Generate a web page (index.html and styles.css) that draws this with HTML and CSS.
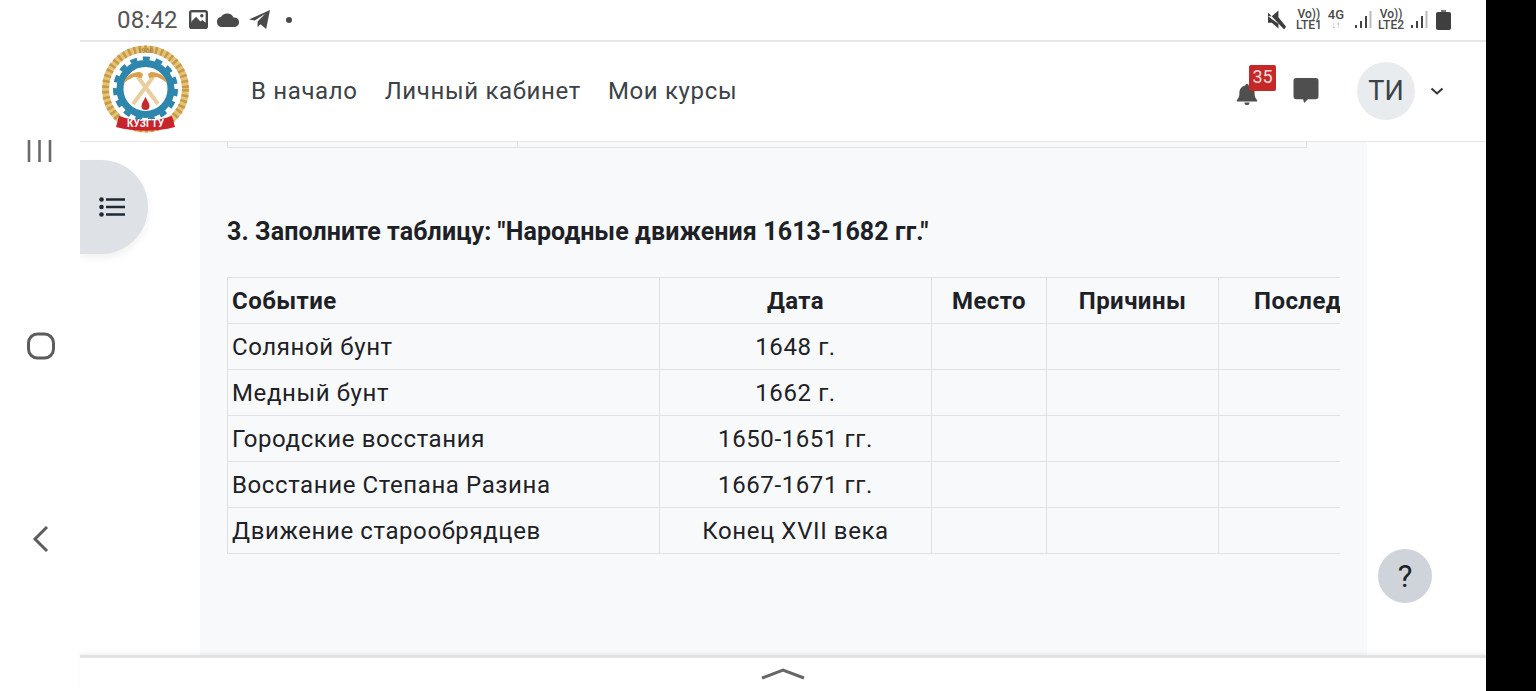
FILE: index.html
```html
<!DOCTYPE html>
<html lang="ru">
<head>
<meta charset="utf-8">
<title>Народные движения</title>
<link rel="stylesheet" href="styles.css">
</head>
<body>
<div class="shell">
  <aside class="rail">
    <svg class="rail-icon ri-menu" width="26" height="24" viewBox="0 0 26 24"><path d="M2 1v22M12.500 1v22M23 1v22" stroke="#6a6a6a" stroke-width="2.600" fill="none"/></svg>
    <svg class="rail-icon ri-home" width="30" height="28" viewBox="0 0 30 28"><rect x="2.500" y="2" width="25" height="24" rx="9" stroke="#5c5c5c" stroke-width="3" fill="none"/></svg>
    <svg class="rail-icon ri-back" width="20" height="30" viewBox="0 0 20 30"><path d="M16 3 4 15l12 12" stroke="#5c5c5c" stroke-width="3" fill="none"/></svg>
  </aside>
  <div class="main">
    <div class="status">
      <div class="status-left">
        <span class="clock">08:42</span>
        <svg width="19" height="19" viewBox="0 0 20 20"><rect x="0" y="0" width="20" height="20" rx="3" fill="#4a4a4a"/><rect x="2.500" y="2.500" width="15" height="11" fill="#fff"/><circle cx="13.500" cy="6" r="1.800" fill="#4a4a4a"/><path d="M2.500 12 7.500 7l4.500 5 2-1.500 3.500 3V15h-15z" fill="#4a4a4a"/></svg>
        <svg width="24" height="14" viewBox="0 0 24 14"><path d="M6 14a5 5 0 0 1-1-9.900A7 7 0 0 1 17.500 4.500 4.800 4.800 0 0 1 19 14z" fill="#4a4a4a"/></svg>
        <svg width="23" height="21" viewBox="0 0 24 22"><path d="M1 11 23 1l-4 20-6-5-3 3v-6l8-8-11 7z" fill="#4a4a4a"/></svg>
        <span class="dot"></span>
      </div>
      <div class="status-right">
        <svg class="mute" width="19" height="20" viewBox="0 0 20 20"><path d="M0 6h4l7-6v7l8 10-2 3L0 2zM0 6v7h4l7 6v-5z" fill="#3d3d3d"/></svg>
        <span class="net"><b>Vo))</b><b>LTE1</b></span>
        <span class="net"><b class="g4">4G</b><i>↓↑</i></span>
        <svg class="bars" width="18" height="20" viewBox="0 0 18 20"><path d="M1 15h2v3H1zM6 11h2v7H6zM11 6h2v12h-2z" fill="#444"/><path d="M15.500 1h2v17h-2z" fill="#bbb"/></svg>
        <span class="net"><b>Vo))</b><b>LTE2</b></span>
        <svg width="18" height="20" viewBox="0 0 18 20"><path d="M1 15h2v3H1zM6 11h2v7H6zM11 6h2v12h-2z" fill="#444"/><path d="M15.500 1h2v17h-2z" fill="#bbb"/></svg>
        <svg class="batt" width="15" height="20" viewBox="0 0 15 20"><path d="M5 0h5v2H5z" fill="#777"/><rect x="0" y="2" width="15" height="18" rx="2" fill="#3f3f3f"/></svg>
      </div>
    </div>
    <header class="nav">
      <svg class="logo" width="92" height="92" viewBox="0 0 92 92">
        <circle cx="45.500" cy="44" r="40" fill="none" stroke="#e3c27c" stroke-width="7"/>
        <circle cx="45.500" cy="44" r="40" fill="none" stroke="#c99a45" stroke-width="7" stroke-dasharray="2.500 3"/>
        <circle cx="45.500" cy="44" r="25.500" fill="#fff" stroke="#2f86ad" stroke-width="7"/>
        <circle cx="45.500" cy="44" r="30.500" fill="none" stroke="#2f86ad" stroke-width="4" stroke-dasharray="7 5.800"/>
        <path d="M33 59 53 32" stroke="#e9cf9f" stroke-width="4"/>
        <path d="M58 59 38 32" stroke="#e9cf9f" stroke-width="4"/>
        <path d="M24 38c1-6 7-11 16-11l3 2-1 4-8-1-6 3z" fill="#d9a04e"/>
        <path d="M67 38c-1-6-7-11-16-11l-3 2 1 4 8-1 6 3z" fill="#d9a04e"/>
        <path d="M45.500 52c2 4 4 6 4 9a4 4 0 0 1-8 0c0-3 2-5 4-9z" fill="#c62c2c"/>
        <path d="M19 71c17 6 36 6 53 0l3 11c-19 5-40 5-59 0z" fill="#c9242c"/>
        <text x="45.500" y="82" class="logo-text">КУЗГТУ</text>
        <text x="45.500" y="8" class="logo-year">1960</text>
      </svg>
      <nav class="links">
        <a>В начало</a>
        <a>Личный кабинет</a>
        <a>Мои курсы</a>
      </nav>
      <div class="tools">
        <div class="bell">
          <svg width="22" height="24" viewBox="0 0 26 28"><path d="M13 2a2 2 0 0 1 2 2c5 1 7 5 7 9 0 5 2 7 3 8v2H1v-2c1-1 3-3 3-8 0-4 2-8 7-9a2 2 0 0 1 2-2zM10 24h6a3 3 0 0 1-6 0z" fill="#4f4f4f"/></svg>
          <span class="badge">35</span>
        </div>
        <svg class="chat" width="26" height="25" viewBox="0 0 26 26"><path d="M3 0h20a3 3 0 0 1 3 3v16a3 3 0 0 1-3 3h-8l-4 4-1-4H3a3 3 0 0 1-3-3V3a3 3 0 0 1 3-3z" fill="#4f4f4f"/></svg>
        <span class="avatar">ТИ</span>
        <svg class="caret" width="14" height="8" viewBox="0 0 14 8"><path d="m1.500 1.500 5.500 5 5.500-5" stroke="#333" stroke-width="2" fill="none"/></svg>
      </div>
    </header>
    <div class="content">
      <button class="toc"><svg width="26" height="20" viewBox="0 0 26 20"><path d="M7 2.500h19M7 10h19M7 17.500h19" stroke="#1f2933" stroke-width="2.600"/><circle cx="2.500" cy="2.500" r="2.300" fill="#1f2933"/><circle cx="2.500" cy="10" r="2.300" fill="#1f2933"/><circle cx="2.500" cy="17.500" r="2.300" fill="#1f2933"/></svg></button>
      <main class="panel">
        <div class="prev-table"><span class="prev-cell"></span></div>
        <h3 class="title">3. Заполните таблицу: "Народные движения 1613-1682 гг."</h3>
        <div class="table-wrap">
          <table class="grid">
            <colgroup><col class="c1"><col class="c2"><col class="c3"><col class="c4"><col class="c5"></colgroup>
            <thead>
              <tr><th class="left">Событие</th><th>Дата</th><th>Место</th><th>Причины</th><th>Последствия</th></tr>
            </thead>
            <tbody>
              <tr><td class="left">Соляной бунт</td><td>1648 г.</td><td></td><td></td><td></td></tr>
              <tr><td class="left">Медный бунт</td><td>1662 г.</td><td></td><td></td><td></td></tr>
              <tr><td class="left">Городские восстания</td><td>1650-1651 гг.</td><td></td><td></td><td></td></tr>
              <tr><td class="left">Восстание Степана Разина</td><td>1667-1671 гг.</td><td></td><td></td><td></td></tr>
              <tr><td class="left">Движение старообрядцев</td><td>Конец XVII века</td><td></td><td></td><td></td></tr>
            </tbody>
          </table>
        </div>
      </main>
      <button class="help">?</button>
    </div>
    <footer class="foot">
      <svg width="46" height="14" viewBox="0 0 46 14"><path d="M2 11 23 3l21 8" stroke="#666" stroke-width="3" fill="none"/></svg>
    </footer>
  </div>
  <div class="edge"></div>
</div>
</body>
</html>
```
FILE: styles.css
```css
* { box-sizing: border-box; }
html, body { margin: 0; height: 100%; overflow: hidden; background: #fff; }
body { font-family: Roboto, "Liberation Sans", sans-serif; color: #1d2125; }
.shell { display: flex; width: 1536px; height: 691px; }
.rail { width: 80px; flex: none; position: relative; }
.rail-icon { position: absolute; }
.ri-menu { left: 27px; top: 139px; }
.ri-home { left: 26px; top: 332px; }
.ri-back { left: 31px; top: 524px; }
.main { width: 1406px; flex: none; display: flex; flex-direction: column; }
.edge { flex: 1; background: #000; }

.status { height: 42px; flex: none; display: flex; justify-content: space-between; align-items: center; padding: 0 35px 1px 37px; border-bottom: 2px solid #e6e6e6; }
.status-left { display: flex; align-items: center; gap: 8px; }
.clock { font-size: 24px; color: #555; margin-right: 3px; letter-spacing: .2px; }
.dot { width: 6px; height: 6px; border-radius: 50%; background: #4a4a4a; margin-left: 7px; }
.status-right { display: flex; align-items: center; gap: 6px; }
.mute { margin-right: 3px; }
.net { display: flex; flex-direction: column; align-items: center; font-size: 12px; line-height: 11px; color: #4a4a4a; }
.net b { font-weight: 500; }
.net .g4 { font-size: 13px; }
.net i { font-style: normal; font-size: 9px; color: #999; }
.bars { margin-left: 4px; }
.batt { margin-left: 2px; }

.nav { height: 100px; flex: none; display: flex; align-items: center; padding: 0 42px 2px 20px; border-bottom: 1px solid #e4e6e8; }
.logo { flex: none; }
.logo-text { font: 700 10px Roboto, sans-serif; fill: #fff; text-anchor: middle; }
.logo-year { font: 700 7px Roboto, sans-serif; fill: #b08a45; text-anchor: middle; }
.links { display: flex; gap: 27px; margin-left: 59px; font-size: 24px; color: #3c4247; letter-spacing: .65px; margin-top: 1px; }
.tools { margin-left: auto; display: flex; align-items: center; }
.bell { position: relative; width: 22px; height: 24px; margin-top: 6px; }
.badge { position: absolute; left: 13px; top: -17px; background: #c62828; color: #f3dcdc; font-size: 18px; line-height: 24px; width: 27px; height: 26px; text-align: center; border-radius: 2px; }
.chat { margin-left: 35px; margin-top: 0; }
.avatar { width: 58px; height: 58px; border-radius: 50%; background: #e9ecef; color: #3c4247; font-size: 27px; line-height: 58px; text-align: center; margin-left: 38px; }
.caret { margin-left: 15px; }

.content { flex: 1; min-height: 0; position: relative; padding-left: 120px; padding-right: 119px; overflow: hidden; }
.panel { height: 100%; background: #f8f9fb; padding: 0 27px; }
.prev-table { height: 6px; width: 1080px; border: 1px solid #dee2e6; border-top: 0; }
.prev-cell { display: block; width: 290px; height: 100%; border-right: 1px solid #dee2e6; }
.title { margin: 0; padding-top: 68px; height: 129px; font-size: 25px; font-weight: 700; line-height: 32px; letter-spacing: .1px; }
.table-wrap { width: 1113px; overflow: hidden; }
.grid { border-collapse: collapse; table-layout: fixed; width: 1300px; font-size: 24px; }
.c1 { width: 432px; }
.c2 { width: 272px; }
.c3 { width: 115px; }
.c4 { width: 172px; }
.c5 { width: 309px; }
.grid th, .grid td { height: 46px; padding: 0 4px; text-align: center; border: 1px solid #dee2e6; white-space: nowrap; overflow: hidden; letter-spacing: .6px; font-weight: 400; }
.grid th { font-weight: 700; letter-spacing: .45px; }
.grid .left { text-align: left; }
.grid th:last-child { text-align: left; padding-left: 35px; }

.toc { position: absolute; left: 0; top: 18px; width: 68px; height: 94px; border: 0; padding: 0 4px 0 0; background: #dee2e6; border-radius: 0 47px 47px 0; box-shadow: 0 4px 8px rgba(0,0,0,.06); display: flex; align-items: center; justify-content: center; }
.help { position: absolute; left: 1298px; top: 407px; width: 54px; height: 54px; border-radius: 50%; border: 0; background: #ced4da; color: #1d2125; font: 400 31px Roboto, sans-serif; padding: 0; }

.foot { height: 36px; flex: none; display: flex; justify-content: center; padding-top: 9px; border-top: 3px solid #e2e2e2; box-shadow: 0 -2px 3px rgba(0,0,0,.05); position: relative; }
```
